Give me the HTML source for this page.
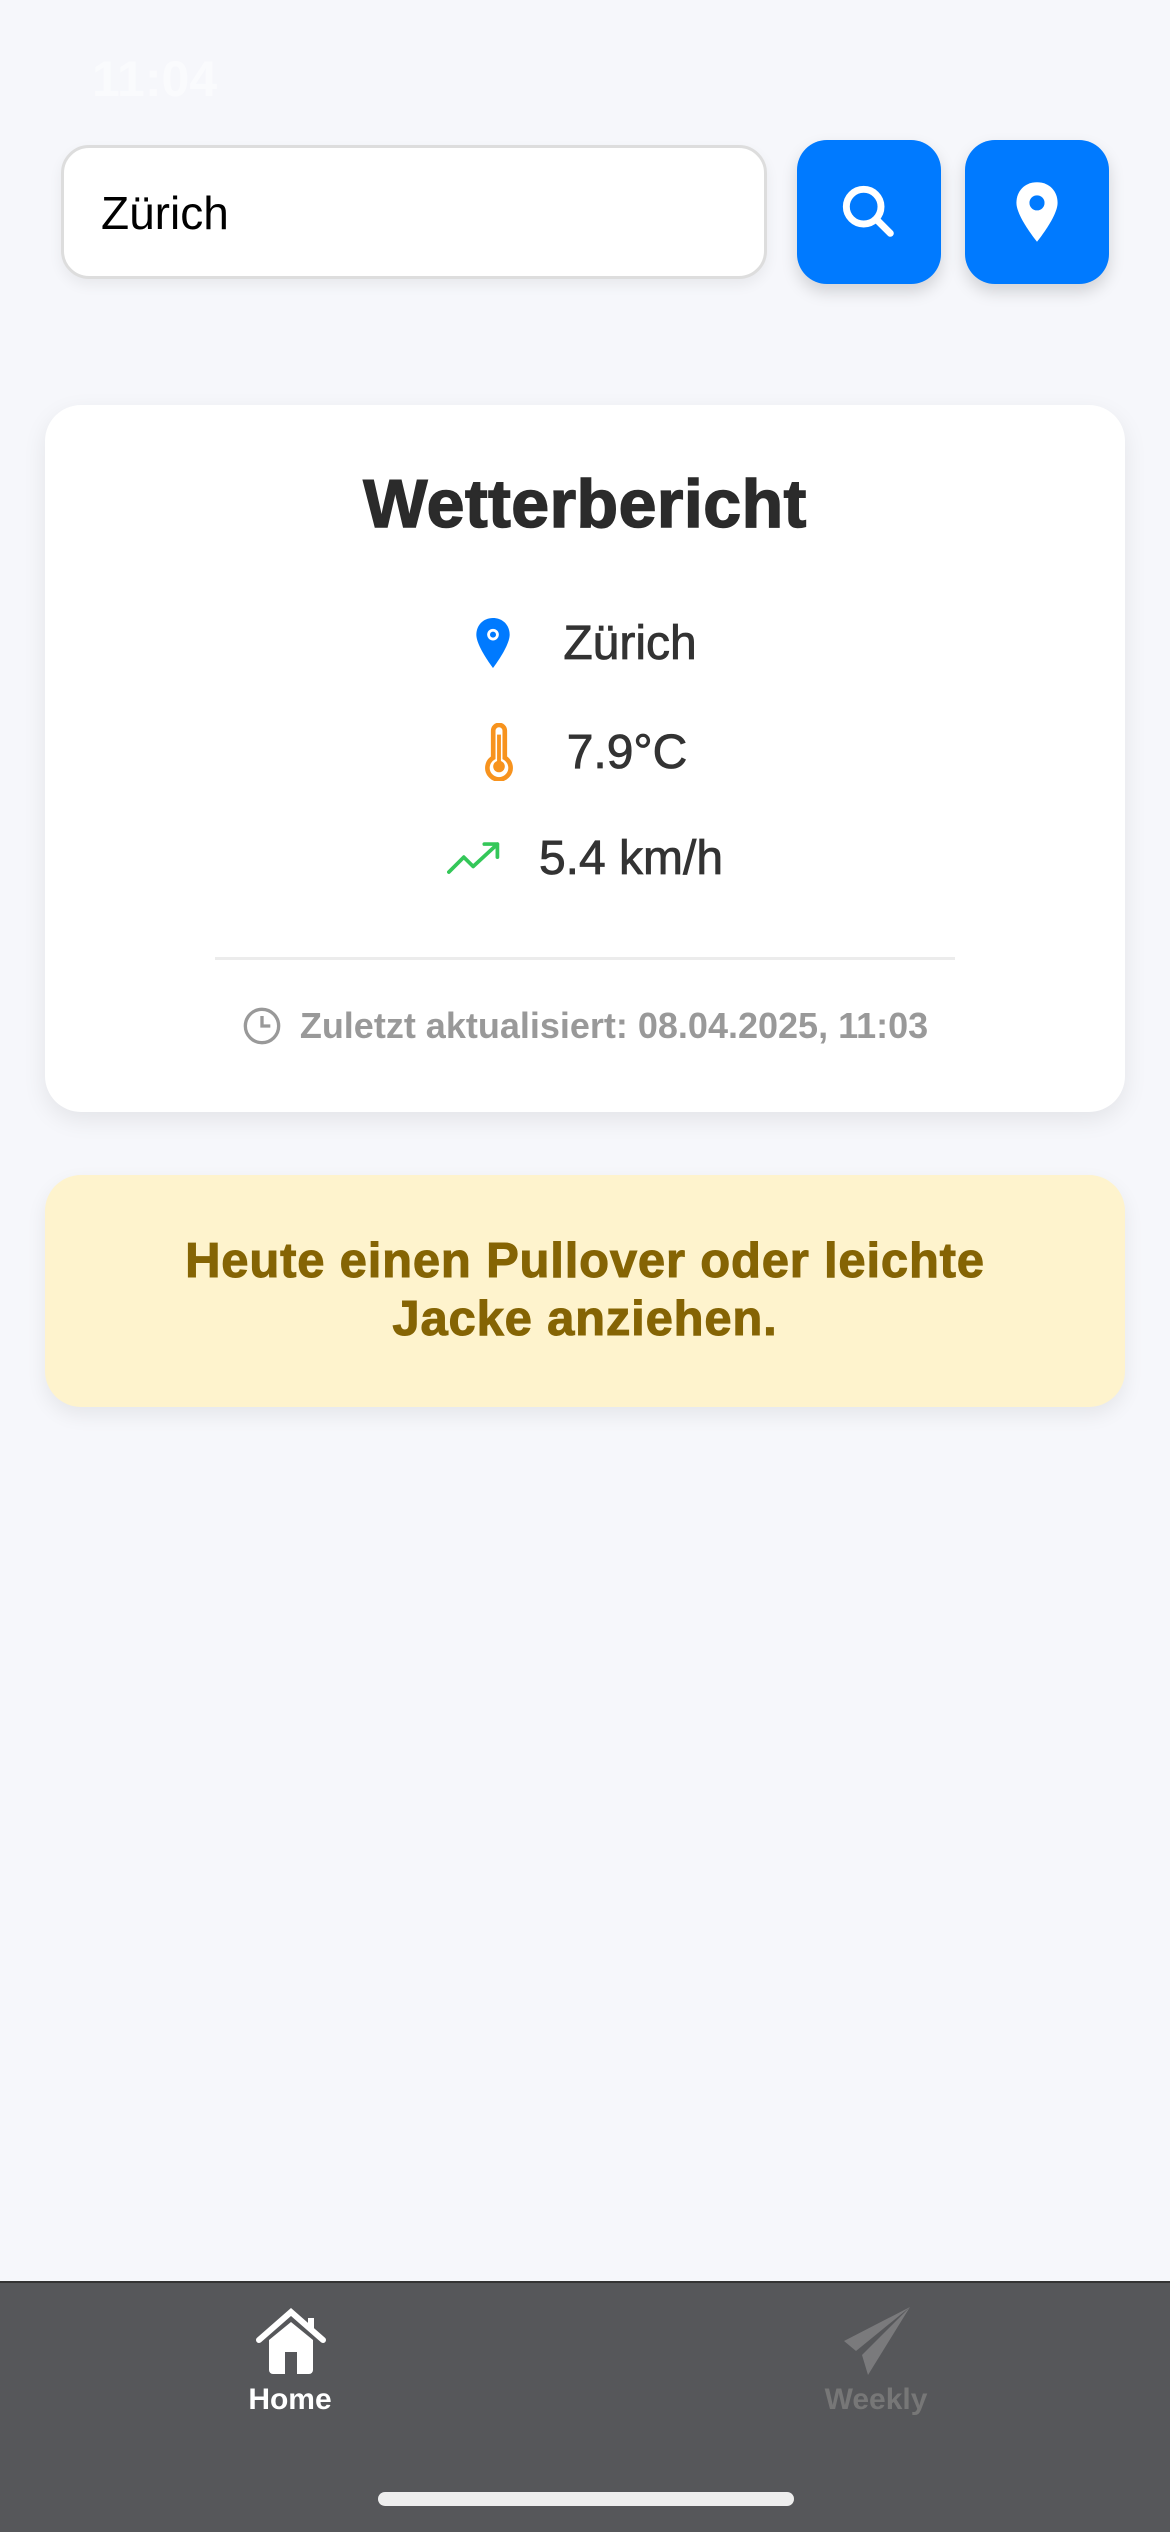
<!DOCTYPE html>
<html><head><meta charset="utf-8"><style>
*{margin:0;padding:0;box-sizing:border-box}
body{width:1170px;height:2532px;background:#f6f7fb;font-family:"Liberation Sans",sans-serif;position:relative;overflow:hidden}
.abs{position:absolute}
.input{left:61px;top:145px;width:706px;height:134px;background:#fff;border:3px solid #ddd;border-radius:28px;box-shadow:0 6px 14px rgba(0,0,0,.06)}
.input span{position:absolute;left:37px;top:38px;font-size:46px;color:#000}
.btn{top:140px;width:144px;height:144px;background:#007aff;border-radius:30px;box-shadow:0 8px 16px rgba(0,0,0,.15);display:flex;align-items:center;justify-content:center}
.card{left:45px;top:405px;width:1080px;height:707px;background:#fff;border-radius:36px;box-shadow:0 8px 24px rgba(0,0,0,.08)}
.row{position:absolute;left:0;width:100%;display:flex;justify-content:center;align-items:center;font-size:48px;color:#333;-webkit-text-stroke:0.8px #333}
.tip{left:45px;top:1175px;width:1080px;height:232px;background:#fef3cd;border-radius:36px;box-shadow:0 8px 20px rgba(0,0,0,.07);color:#856404;font-weight:bold;font-size:49px;letter-spacing:0.8px;text-align:center;line-height:58px;padding-top:57px;-webkit-text-stroke:1px #856404}
.tab{left:0;top:2281px;width:1170px;height:251px;background:#56575a;border-top:2px solid #333}
</style></head><body>
<div class="abs" style="left:92px;top:50px;font-size:50px;font-weight:bold;color:#fff;opacity:.5">11:04</div>
<div class="abs input"><span>Zürich</span></div>
<div class="abs btn" style="left:797px"><svg width="64" height="64" viewBox="0 0 24 24" fill="none" stroke="#fff" stroke-width="2.6" stroke-linecap="round"><circle cx="10" cy="10" r="6.5"/><path d="M15 15l5 5"/></svg></div>
<div class="abs btn" style="left:965px"><svg width="56" height="64" viewBox="0 0 24 28"><path fill="#fff" d="M12 1C6.5 1 3 5 3 10c0 6 9 17 9 17s9-11 9-17c0-5-3.5-9-9-9z"/><circle cx="12" cy="10" r="3.3" fill="#007aff"/></svg></div>
<div class="abs card">
 <div class="row" style="top:60px;font-size:68px;font-weight:bold;color:#2b2b2b;-webkit-text-stroke:1.5px #2b2b2b;letter-spacing:0.5px">Wetterbericht</div>
 <div class="row" style="top:210px"><svg width="40" height="56" viewBox="0 0 24 32" style="margin-right:50px"><path fill="#007aff" d="M12 1C6 1 2 5.5 2 11c0 7 10 20 10 20s10-13 10-20C22 5.5 18 1 12 1z"/><circle cx="12" cy="11" r="3.5" fill="#fff"/><circle cx="12" cy="11" r="1.8" fill="#007aff"/></svg><span>Zürich</span></div>
 <div class="row" style="top:318px"><svg width="32" height="58" viewBox="0 0 16 30" style="margin-right:52px"><path fill="none" stroke="#f7931e" stroke-width="2.4" d="M5 18V4a3 3 0 016 0v14a6 6 0 11-6 0z"/><circle cx="8" cy="22.5" r="3" fill="#f7931e"/><path d="M8 6v15" stroke="#f7931e" stroke-width="2"/></svg><span>7.9°C</span></div>
 <div class="row" style="top:426px"><svg width="56" height="34" viewBox="0 0 30 18" style="margin-right:36px"><path fill="none" stroke="#34c759" stroke-width="2" stroke-linecap="round" stroke-linejoin="round" d="M1 16l8-8 5 5 13-12M20 1h7v7"/></svg><span>5.4 km/h</span></div>
 <div class="abs" style="left:170px;top:552px;width:740px;height:3px;background:#ececec"></div>
 <div class="row" style="top:600px;font-size:36px;color:#999;font-weight:bold;-webkit-text-stroke:0"><svg width="40" height="40" viewBox="0 0 24 24" style="margin-right:18px"><circle cx="12" cy="12" r="10" fill="none" stroke="#999" stroke-width="2"/><path d="M12 6v6h5" fill="none" stroke="#999" stroke-width="2"/></svg><span>Zuletzt aktualisiert: 08.04.2025, 11:03</span></div>
</div>
<div class="abs tip">Heute einen Pullover oder leichte<br>Jacke anziehen.</div>
<div class="abs tab">
 <svg class="abs" style="left:255px;top:24px" width="72" height="70" viewBox="0 0 36 34"><path d="M2 16L18 2l16 14" fill="none" stroke="#fff" stroke-width="3" stroke-linecap="round"/><path d="M28 5v6" stroke="#fff" stroke-width="3"/><path fill="#fff" d="M7 16l11-9 11 9v15a2 2 0 01-2 2H9a2 2 0 01-2-2z"/><rect x="15" y="22" width="6" height="11" fill="#56575a"/></svg>
 <div class="abs" style="left:230px;top:100px;width:120px;text-align:center;color:#fff;font-weight:bold;font-size:30px">Home</div>
 <svg class="abs" style="left:838px;top:20px" width="76" height="76" viewBox="0 0 38 38"><path fill="#7a7a7c" d="M36 2L3 19l6 5zM36 2L12 26l3 10z"/></svg>
 <div class="abs" style="left:816px;top:100px;width:120px;text-align:center;color:#777;font-weight:bold;font-size:30px">Weekly</div>
 <div class="abs" style="left:378px;top:209px;width:416px;height:14px;border-radius:7px;background:#eee"></div>
</div>
</body></html>
